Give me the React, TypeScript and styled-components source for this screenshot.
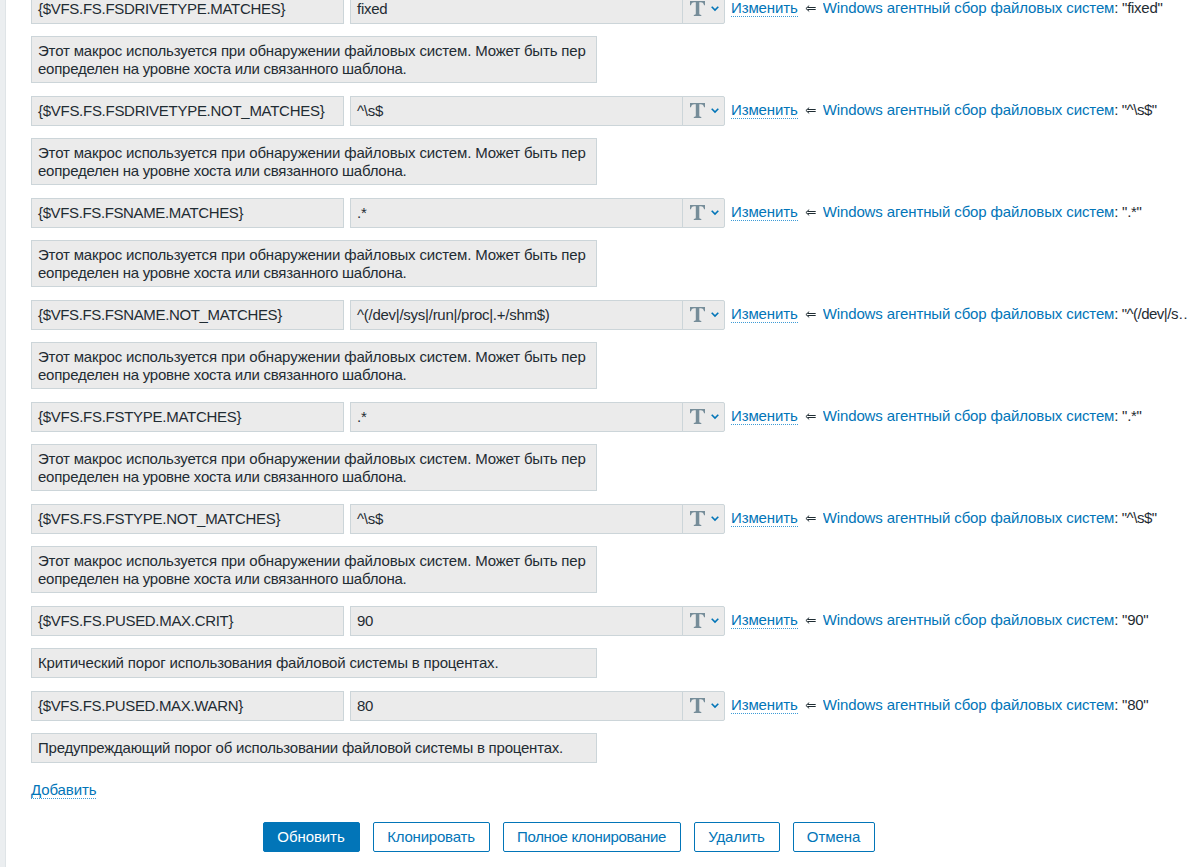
import React from "react";
import styled, { createGlobalStyle, css } from "styled-components";

const GlobalStyle = createGlobalStyle`
  * { box-sizing: border-box; }
  html, body { margin: 0; padding: 0; overflow: hidden; background: #ebeef0; }
  body { font: 15px/18px "Liberation Sans", Arial, sans-serif; color: #1f2c33; }
`;

const Page = styled.main`
  width: 1187px;
  height: 867px;
  padding-left: 5px;
  overflow: hidden;
  background: #ebeef0;
`;

const Panel = styled.section`
  height: 867px;
  padding-left: 25px;
  border-left: 1px solid #dfe4e7;
  background: #fff;
  overflow: hidden;
`;

const MacroList = styled.div`
  display: flex;
  flex-direction: column;
  gap: 13px;
  margin-top: -6px;
`;

const Macro = styled.div`
  display: flex;
  flex-direction: column;
  gap: 12px;
`;

const MacroRow = styled.div`
  display: flex;
  height: 30px;
`;

const field = css`
  flex: none;
  border: 1px solid #ccd5d9;
  background: #ebebeb;
  padding: 5px 6px 4px;
  white-space: pre;
`;

const NameField = styled.div<{ $tracking: number }>`
  ${field}
  width: 313px;
  margin-right: 6px;
  letter-spacing: ${(p) => p.$tracking}px;
`;

const ValueField = styled.div`
  ${field}
  width: 333px;
  letter-spacing: -0.26px;
`;

const TypeButton = styled.button`
  display: flex;
  flex: none;
  align-items: center;
  width: 43px;
  height: 30px;
  margin: 0 6px 0 -1px;
  padding: 0 0 0 7px;
  gap: 6px;
  border: 1px solid #ccd5d9;
  border-radius: 0 2px 2px 0;
  background: #ebebeb;
`;

const TypeGlyph = styled.svg`
  flex: none;
  margin-bottom: 1px;
`;

const Description = styled.div`
  ${field}
  width: 566px;
  min-height: 30px;
`;

const Line = styled.div<{ $tracking: number }>`
  letter-spacing: ${(p) => p.$tracking}px;
`;

const Inherited = styled.div`
  display: flex;
  flex: none;
  width: 463px;
  padding-top: 5px;
`;

const DottedLink = styled.a`
  flex: none;
  height: 18px;
  color: #0275b8;
  letter-spacing: -0.12px;
  border-bottom: 1px dotted #3d9bd6;
`;

const Arrow = styled.svg`
  flex: none;
  margin: 6px 7px 0 7px;
`;

const Source = styled.div<{ $tracking?: number }>`
  flex: 1;
  min-width: 0;
  overflow: hidden;
  text-overflow: ellipsis;
  white-space: nowrap;
  letter-spacing: ${(p) => p.$tracking ?? -0.27}px;
`;

const SourceLink = styled.a`
  color: #0275b8;
  letter-spacing: -0.12px;
`;

const AddLine = styled.div`
  display: flex;
  margin-top: 18px;
`;

const Actions = styled.div`
  display: flex;
  gap: 13px;
  margin: 23px 0 0 232px;
`;

const Button = styled.button<{ $width: number; $primary?: boolean; $tracking?: number }>`
  width: ${(p) => p.$width}px;
  height: 30px;
  padding: 0 1px 0 0;
  border: 1px solid #0275b8;
  border-radius: 2px;
  font: inherit;
  letter-spacing: ${(p) => p.$tracking ?? -0.08}px;
  white-space: nowrap;
  color: ${(p) => (p.$primary ? "#fff" : "#0275b8")};
  background: ${(p) => (p.$primary ? "#0275b8" : "#fff")};
`;

type TextLine = [text: string, tracking: number];

interface MacroData {
  name: string;
  tracking: number;
  value: string;
  sourceTracking?: number;
  lines: TextLine[];
}

const DISCOVERY: TextLine[] = [
  ["Этот макрос используется при обнаружении файловых систем. Может быть пер", -0.167],
  ["еопределен на уровне хоста или связанного шаблона.", -0.24],
];

const macros: MacroData[] = [
  { name: "{$VFS.FS.FSDRIVETYPE.MATCHES}", tracking: -0.29, value: "fixed", lines: DISCOVERY },
  { name: "{$VFS.FS.FSDRIVETYPE.NOT_MATCHES}", tracking: -0.28, value: "^\\s$", sourceTracking: -0.45, lines: DISCOVERY },
  { name: "{$VFS.FS.FSNAME.MATCHES}", tracking: -0.37, value: ".*", lines: DISCOVERY },
  {
    name: "{$VFS.FS.FSNAME.NOT_MATCHES}",
    tracking: -0.36,
    value: "^(/dev|/sys|/run|/proc|.+/shm$)",
    sourceTracking: -0.5,
    lines: DISCOVERY,
  },
  { name: "{$VFS.FS.FSTYPE.MATCHES}", tracking: -0.27, value: ".*", lines: DISCOVERY },
  { name: "{$VFS.FS.FSTYPE.NOT_MATCHES}", tracking: -0.27, value: "^\\s$", sourceTracking: -0.45, lines: DISCOVERY },
  {
    name: "{$VFS.FS.PUSED.MAX.CRIT}",
    tracking: -0.31,
    value: "90",
    lines: [["Критический порог использования файловой системы в процентах.", -0.17]],
  },
  {
    name: "{$VFS.FS.PUSED.MAX.WARN}",
    tracking: -0.33,
    value: "80",
    lines: [["Предупреждающий порог об использовании файловой системы в процентах.", -0.22]],
  },
];

const TextTypeIcon = () => (
  <TypeGlyph width="15" height="15" viewBox="0 0 15 15" fill="#768d99">
    <path d="M0 0h15v4.2h-1C13.7 2.1 12.8 1.2 10.7 1.2H9.3v11.4c0 1 .6 1.3 2 1.4v1H3.8v-1c1.4-.1 2-.4 2-1.4V1.2H4.3C2.2 1.2 1.3 2.1 1 4.2H0z" />
  </TypeGlyph>
);

const Chevron = () => (
  <svg width="8" height="6" viewBox="0 0 8 6" fill="none" stroke="#0275b8" strokeWidth="1.6">
    <path d="M.7 .8 4 4.1 7.3 .8" />
  </svg>
);

export default function App() {
  return (
    <Page>
      <GlobalStyle />
      <Panel>
        <MacroList>
          {macros.map((m) => (
            <Macro key={m.name}>
              <MacroRow>
                <NameField $tracking={m.tracking}>{m.name}</NameField>
                <ValueField>{m.value}</ValueField>
                <TypeButton aria-label="Text">
                  <TextTypeIcon />
                  <Chevron />
                </TypeButton>
                <Inherited>
                  <DottedLink>Изменить</DottedLink>
                  <Arrow width="11" height="8" viewBox="0 0 11 8" fill="none" stroke="#1f2c33">
                    <path d="M10.7 2.5H2.5M10.7 4.5H2.5M4.2.6.9 3.5l3.3 2.9" />
                  </Arrow>
                  <Source $tracking={m.sourceTracking}>
                    <SourceLink>Windows агентный сбор файловых систем</SourceLink>
                    {`: "${m.value}"`}
                  </Source>
                </Inherited>
              </MacroRow>
              <Description>
                {m.lines.map(([text, tracking]) => (
                  <Line key={text} $tracking={tracking}>{text}</Line>
                ))}
              </Description>
            </Macro>
          ))}
        </MacroList>
        <AddLine>
          <DottedLink>Добавить</DottedLink>
        </AddLine>
        <Actions>
          <Button $width={97} $primary>Обновить</Button>
          <Button $width={117} $tracking={-0.2}>Клонировать</Button>
          <Button $width={178} $tracking={-0.33}>Полное клонирование</Button>
          <Button $width={86}>Удалить</Button>
          <Button $width={82}>Отмена</Button>
        </Actions>
      </Panel>
    </Page>
  );
}
